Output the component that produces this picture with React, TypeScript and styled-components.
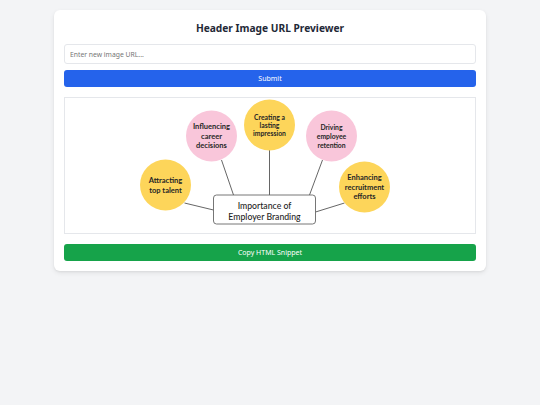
import React, { useState } from 'react'
import styled, { createGlobalStyle } from 'styled-components'

const GlobalStyle = createGlobalStyle`
  html, body {
    margin: 0;
    padding: 0;
    background: #f3f4f6;
    font-family: 'Noto Sans', 'Open Sans', sans-serif;
  }
  * {
    box-sizing: border-box;
  }
`

const Page = styled.div`
  min-height: 405px;
  padding: 10px 54px;
`

const Card = styled.div`
  width: 432px;
  background: #ffffff;
  border-radius: 6px;
  padding: 10px;
  box-shadow: 0 2px 5px rgba(0, 0, 0, 0.08), 0 1px 2px rgba(0, 0, 0, 0.05);
`

const Title = styled.h1`
  margin: 0 0 8px;
  font-size: 10.2px;
  line-height: 16px;
  font-weight: 700;
  text-align: center;
  color: #1f2937;
`

const UrlInput = styled.input`
  display: block;
  width: 100%;
  height: 20px;
  margin: 0 0 6px;
  padding: 0 5px;
  border: 1px solid #e5e7eb;
  border-radius: 3px;
  font-family: inherit;
  font-size: 6.8px;
  color: #374151;
  outline: none;

  ::placeholder {
    color: #9ca3af;
  }
`

const Button = styled.button<{ tone: 'blue' | 'green' }>`
  display: block;
  width: 100%;
  height: 17px;
  padding: 0;
  border: none;
  border-radius: 3px;
  background: ${({ tone }) => (tone === 'blue' ? '#2563eb' : '#16a34a')};
  color: #ffffff;
  font-family: inherit;
  font-size: 7px;
  cursor: pointer;
`

const ImageFrame = styled.div`
  margin: 10px 0;
  height: 137px;
  border: 1px solid #e5e7eb;
  background: #ffffff;
  overflow: hidden;
`

const Diagram = styled.svg`
  display: block;
  width: 100%;
  height: 135px;
  font-family: Lato, 'Noto Sans', sans-serif;
`

type Bubble = {
  cx: number
  cy: number
  fill: string
  size: number
  gap: number
  lines: string[]
  to: [number, number, number, number]
}

const YELLOW = '#fdd55a'
const PINK = '#f9c6da'

const bubbles: Bubble[] = [
  { cx: 165, cy: 185, fill: YELLOW, size: 7.5, gap: 10, lines: ['Attracting', 'top talent'], to: [184, 203, 213, 210] },
  { cx: 211, cy: 136, fill: PINK, size: 7.5, gap: 9.5, lines: ['Influencing', 'career', 'decisions'], to: [221, 160, 233, 195] },
  { cx: 269, cy: 125, fill: YELLOW, size: 6.8, gap: 8, lines: ['Creating a', 'lasting', 'impression'], to: [269, 150, 269, 195] },
  { cx: 331, cy: 136, fill: PINK, size: 6.8, gap: 9, lines: ['Driving', 'employee', 'retention'], to: [322, 160, 309, 195] },
  { cx: 364, cy: 187, fill: YELLOW, size: 7.5, gap: 9.5, lines: ['Enhancing', 'recruitment', 'efforts'], to: [344, 203, 315, 212] },
]

function BrandingDiagram() {
  return (
    <Diagram viewBox="65 98 409 135">
      {bubbles.map((b, i) => (
        <line key={`l${i}`} x1={b.to[0]} y1={b.to[1]} x2={b.to[2]} y2={b.to[3]} stroke="#555" strokeWidth={0.9} />
      ))}
      {bubbles.map((b, i) => {
        const top = b.cy - ((b.lines.length - 1) * b.gap) / 2
        return (
          <g key={`b${i}`}>
            <circle cx={b.cx} cy={b.cy} r={25.5} fill={b.fill} />
            {b.lines.map((t, j) => (
              <text
                key={j}
                x={b.cx}
                y={top + j * b.gap}
                textAnchor="middle"
                dominantBaseline="central"
                fontSize={b.size}
                fontWeight={700}
                fill="#262626"
              >
                {t}
              </text>
            ))}
          </g>
        )
      })}
      <rect x={213} y={195} width={102} height={29} rx={3} fill="#ffffff" stroke="#666" strokeWidth={0.9} />
      <text x={264} y={205} textAnchor="middle" dominantBaseline="central" fontSize={8.7} fontWeight={500} fill="#1e1e1e">
        Importance of
      </text>
      <text x={264} y={216} textAnchor="middle" dominantBaseline="central" fontSize={8.7} fontWeight={500} fill="#1e1e1e">
        Employer Branding
      </text>
    </Diagram>
  )
}

export default function App() {
  const [url, setUrl] = useState('')

  return (
    <Page>
      <GlobalStyle />
      <Card>
        <Title>Header Image URL Previewer</Title>
        <UrlInput value={url} placeholder="Enter new image URL..." onChange={(e) => setUrl(e.target.value)} />
        <Button tone="blue">Submit</Button>
        <ImageFrame>
          <BrandingDiagram />
        </ImageFrame>
        <Button tone="green">Copy HTML Snippet</Button>
      </Card>
    </Page>
  )
}
